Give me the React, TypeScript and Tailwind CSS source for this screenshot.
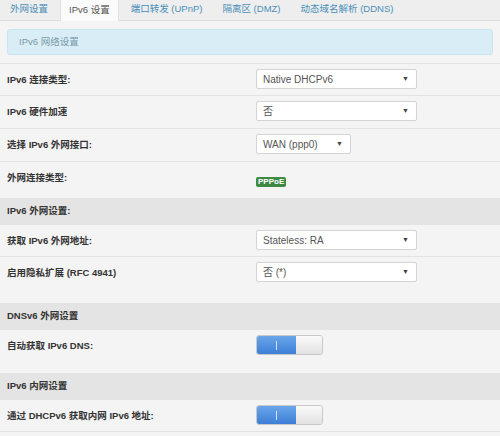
import React from "react";

const font = { fontFamily: '"Liberation Sans", Arial, "Noto Sans CJK SC", sans-serif' };

function Select({ value, w }: { value: string; w: string }) {
  return (
    <div className={`${w} h-[20px] bg-white border border-[#d4d4d4] rounded-[2px] flex items-center justify-between pl-[6px] pr-[7px] text-[10px] text-[#555]`}>
      <span>{value}</span>
      <span className="text-[7px] text-[#444]">▼</span>
    </div>
  );
}

function Toggle() {
  return (
    <div className="w-[67px] h-[20px] rounded-[3px] border border-[#c8c8c8] flex overflow-hidden">
      <div className="w-[39px] h-full bg-gradient-to-b from-[#6aa6ea] to-[#3d7fd6] flex items-center justify-center">
        <div className="w-[1px] h-[9px] bg-[#cfe6ff]" />
      </div>
      <div className="flex-1 h-full bg-gradient-to-b from-[#fafafa] to-[#e2e2e2]" />
    </div>
  );
}

function Row({ label, h, children, last }: { label: string; h: string; children?: React.ReactNode; last?: boolean }) {
  return (
    <div className={`flex ${h} ${last ? "" : "border-b border-[#e3e3e3]"}`}>
      <div className="w-[256px] pl-[7px] pt-[9px] text-[9.5px] font-bold text-[#333]">{label}</div>
      <div className="flex-1 pt-[5px]">{children}</div>
    </div>
  );
}

function Header({ label, h }: { label: string; h: string }) {
  return (
    <div className={`${h} bg-[#e4e4e4] pl-[7px] flex items-center text-[9.5px] font-bold text-[#333]`}>{label}</div>
  );
}

export default function App() {
  const tabs = ["外网设置", "IPv6 设置", "端口转发 (UPnP)", "隔离区 (DMZ)", "动态域名解析 (DDNS)"];
  return (
    <div className="w-[500px] h-[436px] bg-[#f4f4f4] overflow-hidden" style={font}>
      <div className="h-[21px] bg-[#eeeeee] border-b border-[#dedede] flex items-end pl-[2px]">
        {tabs.map((t, i) => (
          <div
            key={t}
            className={`h-[21px] px-[8px] mr-[4px] flex items-center text-[9.5px] ${
              i === 1 ? "bg-[#fbfbfb] text-[#555] border-x border-t border-[#e2e2e2] rounded-t-[2px] h-[22px] -mb-[1px]" : "text-[#4a8fb8]"
            }`}
          >
            {t}
          </div>
        ))}
      </div>
      <div className="px-[7px] pt-[8px]">
        <div className="h-[26px] bg-[#d9edf7] border border-[#c9e6f0] rounded-[3px] flex items-center pl-[11px] text-[9.5px] text-[#7a9aa8]">
          IPv6 网络设置
        </div>
      </div>
      <div className="mt-[8px] border-t border-[#e3e3e3]">
        <Row label="IPv6 连接类型:" h="h-[32px]">
          <Select value="Native DHCPv6" w="w-[161px]" />
        </Row>
        <Row label="IPv6 硬件加速" h="h-[33px]">
          <Select value="否" w="w-[161px]" />
        </Row>
        <Row label="选择 IPv6 外网接口:" h="h-[33px]">
          <Select value="WAN (ppp0)" w="w-[95px]" />
        </Row>
        <Row label="外网连接类型:" h="h-[36px]" last>
          <div className="mt-[4px] inline-flex items-center h-[10px] px-[2px] bg-[#3f8a43] rounded-[2px] text-[8px] font-bold text-white leading-none">
            PPPoE
          </div>
        </Row>
        <Header label="IPv6 外网设置:" h="h-[27px]" />
        <Row label="获取 IPv6 外网地址:" h="h-[32px]">
          <Select value="Stateless: RA" w="w-[161px]" />
        </Row>
        <Row label="启用隐私扩展 (RFC 4941)" h="h-[46px]" last>
          <Select value="否 (*)" w="w-[161px]" />
        </Row>
        <Header label="DNSv6 外网设置" h="h-[27px]" />
        <Row label="自动获取 IPv6 DNS:" h="h-[43px]" last>
          <Toggle />
        </Row>
        <Header label="IPv6 内网设置" h="h-[27px]" />
        <Row label="通过 DHCPv6 获取内网 IPv6 地址:" h="h-[32px]">
          <Toggle />
        </Row>
      </div>
    </div>
  );
}
